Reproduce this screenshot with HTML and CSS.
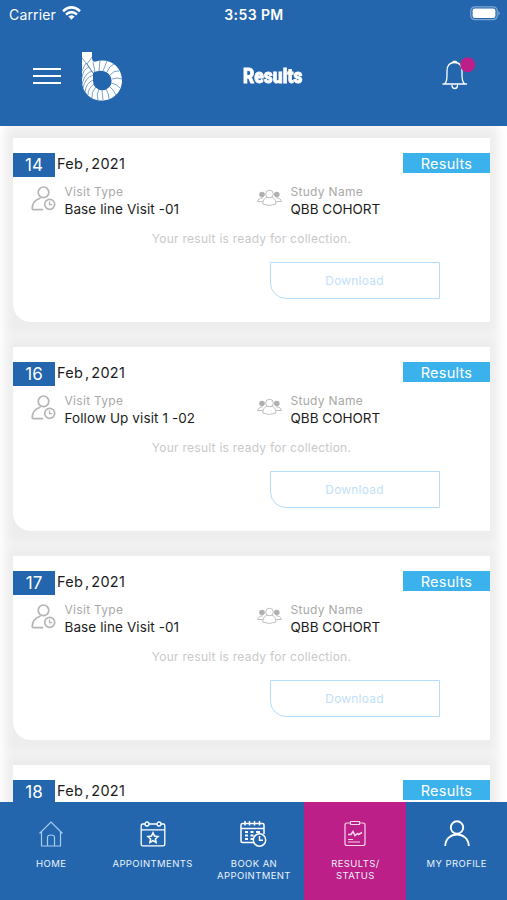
FILE: index.html
```html
<!DOCTYPE html>
<html lang="en">
<head>
<meta charset="utf-8">
<title>Results</title>
<link rel="stylesheet" href="styles.css">
</head>
<body>
<svg class="defs" width="0" height="0">
  <symbol id="visit" viewBox="0 0 25 25">
    <g fill="none" stroke="#b5b5b5" stroke-width="1.7" stroke-linecap="round" stroke-linejoin="round">
      <circle cx="12.5" cy="6.3" r="5.3"/>
      <path d="M9 12.2C4 14 1.3 18 1.2 22.5q0 1.2 1.2 1.2H11.500"/>
      <circle cx="18.700" cy="18.300" r="5"/>
      <path d="M18.500 15.800v2.900h2.300" stroke-width="1.300"/>
    </g>
  </symbol>
  <symbol id="group" viewBox="0 0 25 18">
    <g fill="#b0b0b0"><circle cx="5" cy="5.500" r="2.800"/><circle cx="19.800" cy="5.500" r="2.800"/></g>
    <g fill="#fff" stroke="#b8b8b8" stroke-width=".9">
      <path d="M6 8.800C2.500 9 .8 10.500.6 12.500h5.200M19 8.800c3.500.2 5.200 1.700 5.400 3.700h-5.200"/>
      <path d="M9.700 8.300C6.800 9.500 5.800 12 5.800 15q6.700 3 13.200 0c0-3-1-5.500-3.800-6.700z"/>
      <circle cx="12.500" cy="5" r="3.800"/>
    </g>
  </symbol>
</svg>

<header class="header">
  <div class="status">
    <div class="carrier"><span>Carrier</span>
      <svg width="19" height="14" viewBox="0 0 19 14" fill="none" stroke="#fff" stroke-width="2.500"><path d="M1 5.200Q9.500-2.400 18 5.200M4 8.500q5.500-4.700 11 0"/><path d="M6.400 10.500q3.100-2.400 6.200 0L9.500 13.700z" fill="#fff" stroke="none"/></svg>
    </div>
    <div class="time">3:53 PM</div>
    <svg class="battery" width="31" height="15" viewBox="0 0 31 15"><rect x=".8" y=".8" width="26.400" height="12.900" rx="4" fill="none" stroke="#7fa8d3" stroke-width="1.200"/><rect x="2.600" y="2.600" width="22.800" height="9.300" rx="2" fill="#fff"/><path d="M28.500 5q2.200 2.300 0 4.500z" fill="#9dbde0"/></svg>
  </div>
  <div class="bar">
    <svg class="menu" width="28" height="18" viewBox="0 0 28 18"><path d="M0 2h28M0 9h28M0 16h28" stroke="#fff" stroke-width="2.200"/></svg>
    <svg class="logo" width="42" height="51" viewBox="0 0 42 51">
      <path d="M1 1h10v5.500Q11 11 14 10.800C28 6 41 15 41 29.500 41 41 32 49.500 21 49.500S1 42 1 29.500z M12 22v8a9.300 9.300 0 1 0 18.600 0c0-8-8.100-12-14.600-9.700Q13 21 12 22z" fill="#fff" fill-rule="evenodd"/>
      <path d="M1 7l5 6 5-7M6 13l6 9M5 12l-4 8M8 16Q2 18 1 27M11 20Q4 22 1 33M12 24Q4 27 2 37M12 29Q5 32 4 41M13 33Q7 37 7 44M15 36q-5 5-4 11M18 38q-3 5-1 11M21 39l1 10M25 38q3 5 3 10M28 35q5 4 7 9M30 32q6 1 9 5M31 28q5-2 10 0M29 24q4-5 9-4M26 21q2-6 7-8M22 20l4-10M18 20l1-11M14 21l-2-10M12 22L6 13" fill="none" stroke="#4c83bf" stroke-width=".75"/>
    </svg>
    <h1 class="title">Results</h1>
    <svg class="bell" width="34" height="33" viewBox="0 0 34 33">
      <g fill="none" stroke="#fff" stroke-width="1.300" stroke-linecap="round"><path d="M1 27h23.500M3 26.500Q5 24.500 5 18v-4C5 8 8 5.500 12.500 5.500S20 8 20 14v4q0 6.500 2.300 8.500M10 28.500c0 4 5.500 4 5.500 0"/><path d="M11.500 4.800h2.300" stroke-width="2.300"/></g>
      <circle cx="25.700" cy="7.800" r="7.500" fill="#bc1f87"/>
    </svg>
  </div>
</header>

<main class="list">
  <article class="card">
    <div class="top"><span class="day">14</span><span class="date">Feb , 2021</span><span class="tag">Results</span></div>
    <div class="info">
      <svg class="visit"><use href="#visit"/></svg>
      <div class="field first"><div class="label">Visit Type</div><div class="value">Base line Visit -01</div></div>
      <svg class="group"><use href="#group"/></svg>
      <div class="field"><div class="label">Study Name</div><div class="value study">QBB COHORT</div></div>
    </div>
    <p class="note">Your result is ready for collection.</p>
    <button class="download">Download</button>
  </article>
  <article class="card">
    <div class="top"><span class="day">16</span><span class="date">Feb , 2021</span><span class="tag">Results</span></div>
    <div class="info">
      <svg class="visit"><use href="#visit"/></svg>
      <div class="field first"><div class="label">Visit Type</div><div class="value">Follow Up visit 1 -02</div></div>
      <svg class="group"><use href="#group"/></svg>
      <div class="field"><div class="label">Study Name</div><div class="value study">QBB COHORT</div></div>
    </div>
    <p class="note">Your result is ready for collection.</p>
    <button class="download">Download</button>
  </article>
  <article class="card">
    <div class="top"><span class="day">17</span><span class="date">Feb , 2021</span><span class="tag">Results</span></div>
    <div class="info">
      <svg class="visit"><use href="#visit"/></svg>
      <div class="field first"><div class="label">Visit Type</div><div class="value">Base line Visit -01</div></div>
      <svg class="group"><use href="#group"/></svg>
      <div class="field"><div class="label">Study Name</div><div class="value study">QBB COHORT</div></div>
    </div>
    <p class="note">Your result is ready for collection.</p>
    <button class="download">Download</button>
  </article>
  <article class="card">
    <div class="top"><span class="day">18</span><span class="date">Feb , 2021</span><span class="tag">Results</span></div>
  </article>
</main>

<nav class="nav">
  <a class="item">
    <svg width="26" height="28" viewBox="0 0 26 28" fill="none" stroke="#a9cbee" stroke-width="1.200"><path d="M1.500 13.500L13 2l11.500 11.500M3.500 12v14h6v-8.500q0-2.500 3.500-2.500t3.500 2.500V26h6V12M9.500 26h7"/></svg>
    <span>HOME</span>
  </a>
  <a class="item">
    <svg width="26" height="28" viewBox="0 0 26 28" fill="none" stroke="#fff" stroke-width="1.300"><path d="M5 4H2.500Q1.200 4 1.200 5.500v18.700q0 1.600 1.600 1.600h20.400q1.600 0 1.600-1.600V5.500Q24.800 4 23.500 4H21M9 4h8M1.200 9.800h23.600"/><circle cx="7" cy="4" r="2"/><circle cx="19" cy="4" r="2"/><path d="M13 12.800l1.500 3.300 3.500.4-2.600 2.400.7 3.600-3.100-1.800-3.100 1.800.7-3.600L8 16.500l3.500-.4z" stroke-width="1.500"/></svg>
    <span>APPOINTMENTS</span>
  </a>
  <a class="item">
    <svg width="27" height="28" viewBox="0 0 27 28" fill="none" stroke="#fff" stroke-width="1.500"><path d="M14 22.500H2.500Q1 22.500 1 21V5Q1 3.500 2.500 3.500h20Q24 3.500 24 5v9M1 8.500h23M5 1v4.500M9.500 1v4.500M14.500 1v4.500M19.500 1v4.500"/><path d="M5 12h3m2.500 0h3m2.500 0h4M5 15.500h3m2.500 0h3M5 19h3m2.500 0h3" stroke-width="2"/><circle cx="19.500" cy="20" r="6.200" fill="#2366ae"/><path d="M19.500 16v4.300H23"/></svg>
    <span>BOOK AN<br>APPOINTMENT</span>
  </a>
  <a class="item active">
    <svg width="22" height="28" viewBox="0 0 22 28" fill="none" stroke="#f6d5ea" stroke-width="1.200"><path d="M6.500 3H3Q1 3 1 5v18.500q0 2 2 2h16q2 0 2-2V5q0-2-2-2h-3.500M6.500 1.500h9v3h-9z"/><path d="M4 14.500h3l2-3 2 4 2.500-2 1 1 3.500-2" stroke-width="1.600"/><path d="M4 19.500h5M4 22h12"/></svg>
    <span>RESULTS/<br>STATUS</span>
  </a>
  <a class="item">
    <svg width="26" height="28" viewBox="0 0 26 28" fill="none" stroke="#fff" stroke-width="1.900"><circle cx="13" cy="7.500" r="6.200"/><path d="M1.200 26C1.800 10.700 24.200 10.700 24.800 26"/></svg>
    <span>MY PROFILE</span>
  </a>
</nav>
</body>
</html>
```
FILE: styles.css
```css
* { box-sizing: border-box; }
body {
  margin: 0;
  width: 507px;
  height: 900px;
  overflow: hidden;
  display: flex;
  flex-direction: column;
  background: #fff;
  font-family: Inter, "Liberation Sans", sans-serif;
}
.defs { display: none; }
svg { flex: none; display: block; }

.header {
  flex: none;
  height: 125.500px;
  background: #2366ae;
  color: #fff;
  position: relative;
  z-index: 1;
}
.status {
  height: 28px;
  padding: 0 6px 0 9px;
  display: grid;
  grid-template-columns: 1fr auto 1fr;
  align-items: center;
  font-size: 14px;
  letter-spacing: .15px;
}
.carrier { display: flex; align-items: center; gap: 6px; }
.carrier svg { margin-top: -2px; }
.time { font-weight: 600; font-size: 14px; letter-spacing: .4px; margin-right: 2px; }
.battery { justify-self: end; margin-top: -2px; }
.bar { display: flex; height: 96px; padding: 0 31px 0 33px; align-items: center; }
.logo { margin-left: 20px; }
.title {
  width: 60px;
  margin: 0 0 0 120px;
  font: 900 21px/30px Roboto, sans-serif;
  white-space: nowrap;
  -webkit-text-stroke: .8px #fff;
  transform: scaleX(.83);
  transform-origin: left;
}
.bell { margin-left: auto; margin-top: -5px; }

.list {
  flex: 1;
  min-height: 0;
  overflow: hidden;
  padding: 12.500px 17px 0 13px;
  display: flex;
  flex-direction: column;
  gap: 25px;
  isolation: isolate;
}
.card {
  flex: none;
  height: 184px;
  padding-top: 15px;
  background: #fff;
  border-bottom-left-radius: 18px;
  display: flex;
  flex-direction: column;
  position: relative;
}
.card::before {
  content: "";
  position: absolute;
  z-index: -1;
  inset: -12.500px -8px;
  background: #ededed;
  filter: blur(5px);
}
.top { display: flex; height: 24px; align-items: flex-start; }
.day {
  width: 42px;
  height: 24px;
  background: #2366ae;
  color: #fff;
  font-size: 17px;
  line-height: 24px;
  text-align: center;
}
.date { margin-left: 2px; font-size: 14.500px; line-height: 21px; color: #1c1c1c; letter-spacing: .3px; word-spacing: -2.600px; }
.tag {
  margin-left: auto;
  width: 87px;
  height: 20px;
  background: #3cb2ed;
  color: #fff;
  font-size: 14.500px;
  line-height: 21px;
  letter-spacing: .25px;
  text-align: center;
}
.info { display: flex; height: 42px; padding: 5px 0 0 18px; }
.visit { width: 25px; height: 25px; margin-top: 4px; }
.field { margin-left: 8.500px; }
.first { width: 192.500px; }
.group { width: 25px; height: 18px; margin-top: 7px; }
.label { font-size: 12px; line-height: 19px; color: #a9a9a9; letter-spacing: .3px; }
.value { font-size: 13.500px; line-height: 17px; color: #1c1c1c; letter-spacing: .1px; }
.study { letter-spacing: 0; }
.note {
  margin: 11px 0 0;
  font-size: 12px;
  line-height: 18px;
  letter-spacing: .25px;
  text-align: center;
  color: #c9c9c9;
}
.download {
  width: 170px;
  height: 37px;
  margin: 14px 0 0 256.500px;
  padding: 0;
  border: 1.500px solid #b5dcfb;
  border-bottom-left-radius: 16px;
  background: #fff;
  color: #bfdffa;
  font: 12px Inter, sans-serif;
  letter-spacing: .2px;
}

.nav {
  flex: none;
  height: 98px;
  display: grid;
  grid-template-columns: repeat(5, 1fr);
  background: #2366ae;
  color: #eaf2fb;
  position: relative;
  z-index: 1;
}
.item {
  padding: 18px 0 0 1px;
  display: flex;
  flex-direction: column;
  align-items: center;
  gap: 10px;
  font-size: 9.500px;
  line-height: 12px;
  letter-spacing: .4px;
  text-align: center;
  white-space: nowrap;
}
.active { background: #bc1f87; }
```
